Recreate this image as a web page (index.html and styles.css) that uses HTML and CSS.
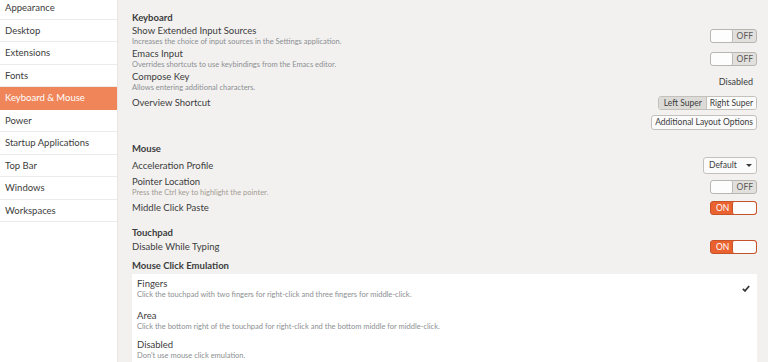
FILE: index.html
```html
<!DOCTYPE html>
<html>
<head>
<meta charset="utf-8">
<link rel="stylesheet" href="styles.css">
</head>
<body>
<div class="app">
  <nav class="sidebar">
    <ul class="nav-list">
      <li class="nav-item">Appearance</li>
      <li class="nav-item">Desktop</li>
      <li class="nav-item">Extensions</li>
      <li class="nav-item">Fonts</li>
      <li class="nav-item selected">Keyboard &amp; Mouse</li>
      <li class="nav-item">Power</li>
      <li class="nav-item">Startup Applications</li>
      <li class="nav-item">Top Bar</li>
      <li class="nav-item">Windows</li>
      <li class="nav-item">Workspaces</li>
    </ul>
  </nav>
  <main class="main">
    <h2 class="section-title first">Keyboard</h2>
    <div class="row">
      <div class="text"><div class="label">Show Extended Input Sources</div><div class="desc">Increases the choice of input sources in the Settings application.</div></div>
      <div class="switch off"><span class="knob"></span><span class="state">OFF</span></div>
    </div>
    <div class="row">
      <div class="text"><div class="label">Emacs Input</div><div class="desc">Overrides shortcuts to use keybindings from the Emacs editor.</div></div>
      <div class="switch off"><span class="knob"></span><span class="state">OFF</span></div>
    </div>
    <div class="row">
      <div class="text"><div class="label">Compose Key</div><div class="desc">Allows entering additional characters.</div></div>
      <div class="value">Disabled</div>
    </div>
    <div class="row short overview">
      <div class="label">Overview Shortcut</div>
      <div class="segmented"><span class="seg active">Left Super</span><span class="seg">Right Super</span></div>
    </div>
    <div class="row end">
      <button class="btn">Additional Layout Options</button>
    </div>

    <h2 class="section-title mouse">Mouse</h2>
    <div class="row short accel">
      <div class="label">Acceleration Profile</div>
      <div class="combo">Default <span class="arrow"></span></div>
    </div>
    <div class="row pointer">
      <div class="text"><div class="label">Pointer Location</div><div class="desc warm">Press the Ctrl key to highlight the pointer.</div></div>
      <div class="switch off"><span class="knob"></span><span class="state">OFF</span></div>
    </div>
    <div class="row short middle">
      <div class="label">Middle Click Paste</div>
      <div class="switch on"><span class="state">ON</span><span class="knob"></span></div>
    </div>

    <h2 class="section-title touchpad">Touchpad</h2>
    <div class="row short typing">
      <div class="label">Disable While Typing</div>
      <div class="switch on"><span class="state">ON</span><span class="knob"></span></div>
    </div>
    <h2 class="section-title emu">Mouse Click Emulation</h2>
    <ul class="listbox">
      <li class="list-item fingers">
        <div class="text"><div class="label">Fingers</div><div class="desc">Click the touchpad with two fingers for right-click and three fingers for middle-click.</div></div>
        <svg class="check" width="8" height="7" viewBox="0 0 8 7"><path d="M0.8 3.8 L3 5.9 L7.2 1" fill="none" stroke="#3c3c3c" stroke-width="1.8"/></svg>
      </li>
      <li class="list-item area">
        <div class="text"><div class="label">Area</div><div class="desc">Click the bottom right of the touchpad for right-click and the bottom middle for middle-click.</div></div>
      </li>
      <li class="list-item last">
        <div class="text"><div class="label">Disabled</div><div class="desc">Don't use mouse click emulation.</div></div>
      </li>
    </ul>
  </main>
</div>
</body>
</html>
```
FILE: styles.css
```css
* { box-sizing: border-box; }
html, body { margin: 0; padding: 0; }
body {
  background: #f2f1f0;
  font-family: "Lato", "Noto Sans", sans-serif;
  color: #4a4a4a;
  width: 768px;
  height: 362px;
  overflow: hidden;
}
.app { display: flex; height: 362px; }

.sidebar {
  width: 118px;
  flex: none;
  background: #ffffff;
  border-right: 1px solid #e8e6e4;
  overflow: hidden;
}
.nav-list { list-style: none; margin: -3px 0 0 0; padding: 0; }
.nav-item {
  height: 22.56px;
  line-height: 21.5px;
  padding-left: 5px;
  font-size: 9.5px;
  color: #3c3c3c;
  border-bottom: 1px solid #ebebeb;
  white-space: nowrap;
}
.nav-item.selected { background: #f0855a; color: #ffffff; border-bottom-color: #f0855a; }

.main { flex: 1; padding: 12px 11px 0 14px; display: flex; flex-direction: column; }

.section-title { margin: 0; font-size: 9.5px; line-height: 12px; font-weight: bold; color: #3c3c3c; }
.section-title.mouse { margin-top: 13px; }
.section-title.touchpad { margin-top: 12px; }
.section-title.emu { margin-top: 6px; }

.row { display: flex; justify-content: space-between; align-items: center; height: 23px; }
.row.short { height: 14px; }
.row.overview { margin-top: 3px; }
.row.end { justify-content: flex-end; height: 15px; margin-top: 5px; }
.row.accel { height: 17px; margin-top: 2px; }
.row.pointer { margin-top: 1px; height: 24px; }
.row.middle { margin-top: 2px; }
.row.typing { margin-top: 1px; }

.label { font-size: 9.5px; line-height: 12px; color: #3c3c3c; white-space: nowrap; }
.desc { font-size: 7.5px; line-height: 10px; color: #8c8f92; white-space: nowrap; }
.desc.warm { color: #a39b90; }
.value { font-size: 9px; color: #3c3c3c; margin-right: 4px; }

.switch {
  width: 47px; height: 14px; flex: none;
  border: 1px solid #b9b6b2; border-radius: 3px;
  display: flex; overflow: hidden;
  font-size: 8.5px; line-height: 12px;
}
.switch.off { background: #e2e0dd; }
.switch.off .knob { width: 22px; background: #fdfdfd; border-right: 1px solid #bcb9b5; border-radius: 2px; }
.switch.off .state { flex: 1; text-align: right; padding-right: 3px; color: #5a5a5a; }
.switch.on { background: #e9622f; border-color: #c4532a; }
.switch.on .state { flex: 1; color: #ffffff; padding-left: 5px; }
.switch.on .knob { width: 24px; background: #fdfdfd; border-left: 1px solid #c4532a; border-radius: 2px; }

.segmented { display: flex; height: 14px; border: 1px solid #c4c1bd; border-radius: 3px; overflow: hidden; font-size: 8.5px; line-height: 12px; }
.seg { padding: 0 3px; background: #fbfbfb; color: #3c3c3c; }
.seg.active { background: #dddbd8; border-right: 1px solid #c4c1bd; padding: 0 4px 0 5px; }

.btn {
  height: 15px; padding: 0 3px; margin: 0;
  font-family: inherit; font-size: 8.5px; line-height: 13px; color: #3c3c3c;
  background: #fbfbfb; border: 1px solid #c4c1bd; border-radius: 3px;
}

.combo {
  width: 54px; height: 17px;
  border: 1px solid #c4c1bd; border-radius: 3px; background: #fbfbfb;
  font-size: 8.5px; line-height: 15px; color: #3c3c3c;
  display: flex; justify-content: space-between; align-items: center;
  padding: 0 4px 0 5px;
}
.arrow { width: 0; height: 0; border-left: 3px solid transparent; border-right: 3px solid transparent; border-top: 3.5px solid #3c3c3c; }

.listbox { list-style: none; margin: 2px 0 0 0; padding: 0; background: #ffffff; height: 88px; }
.list-item { display: flex; justify-content: space-between; align-items: center; padding: 4px 7px 4px 5px; }
.list-item.fingers { height: 30px; }
.list-item.area { height: 32px; padding-top: 5px; }
.list-item.last { height: 26px; padding-top: 5px; }
.check { margin-top: -2px; }
```
